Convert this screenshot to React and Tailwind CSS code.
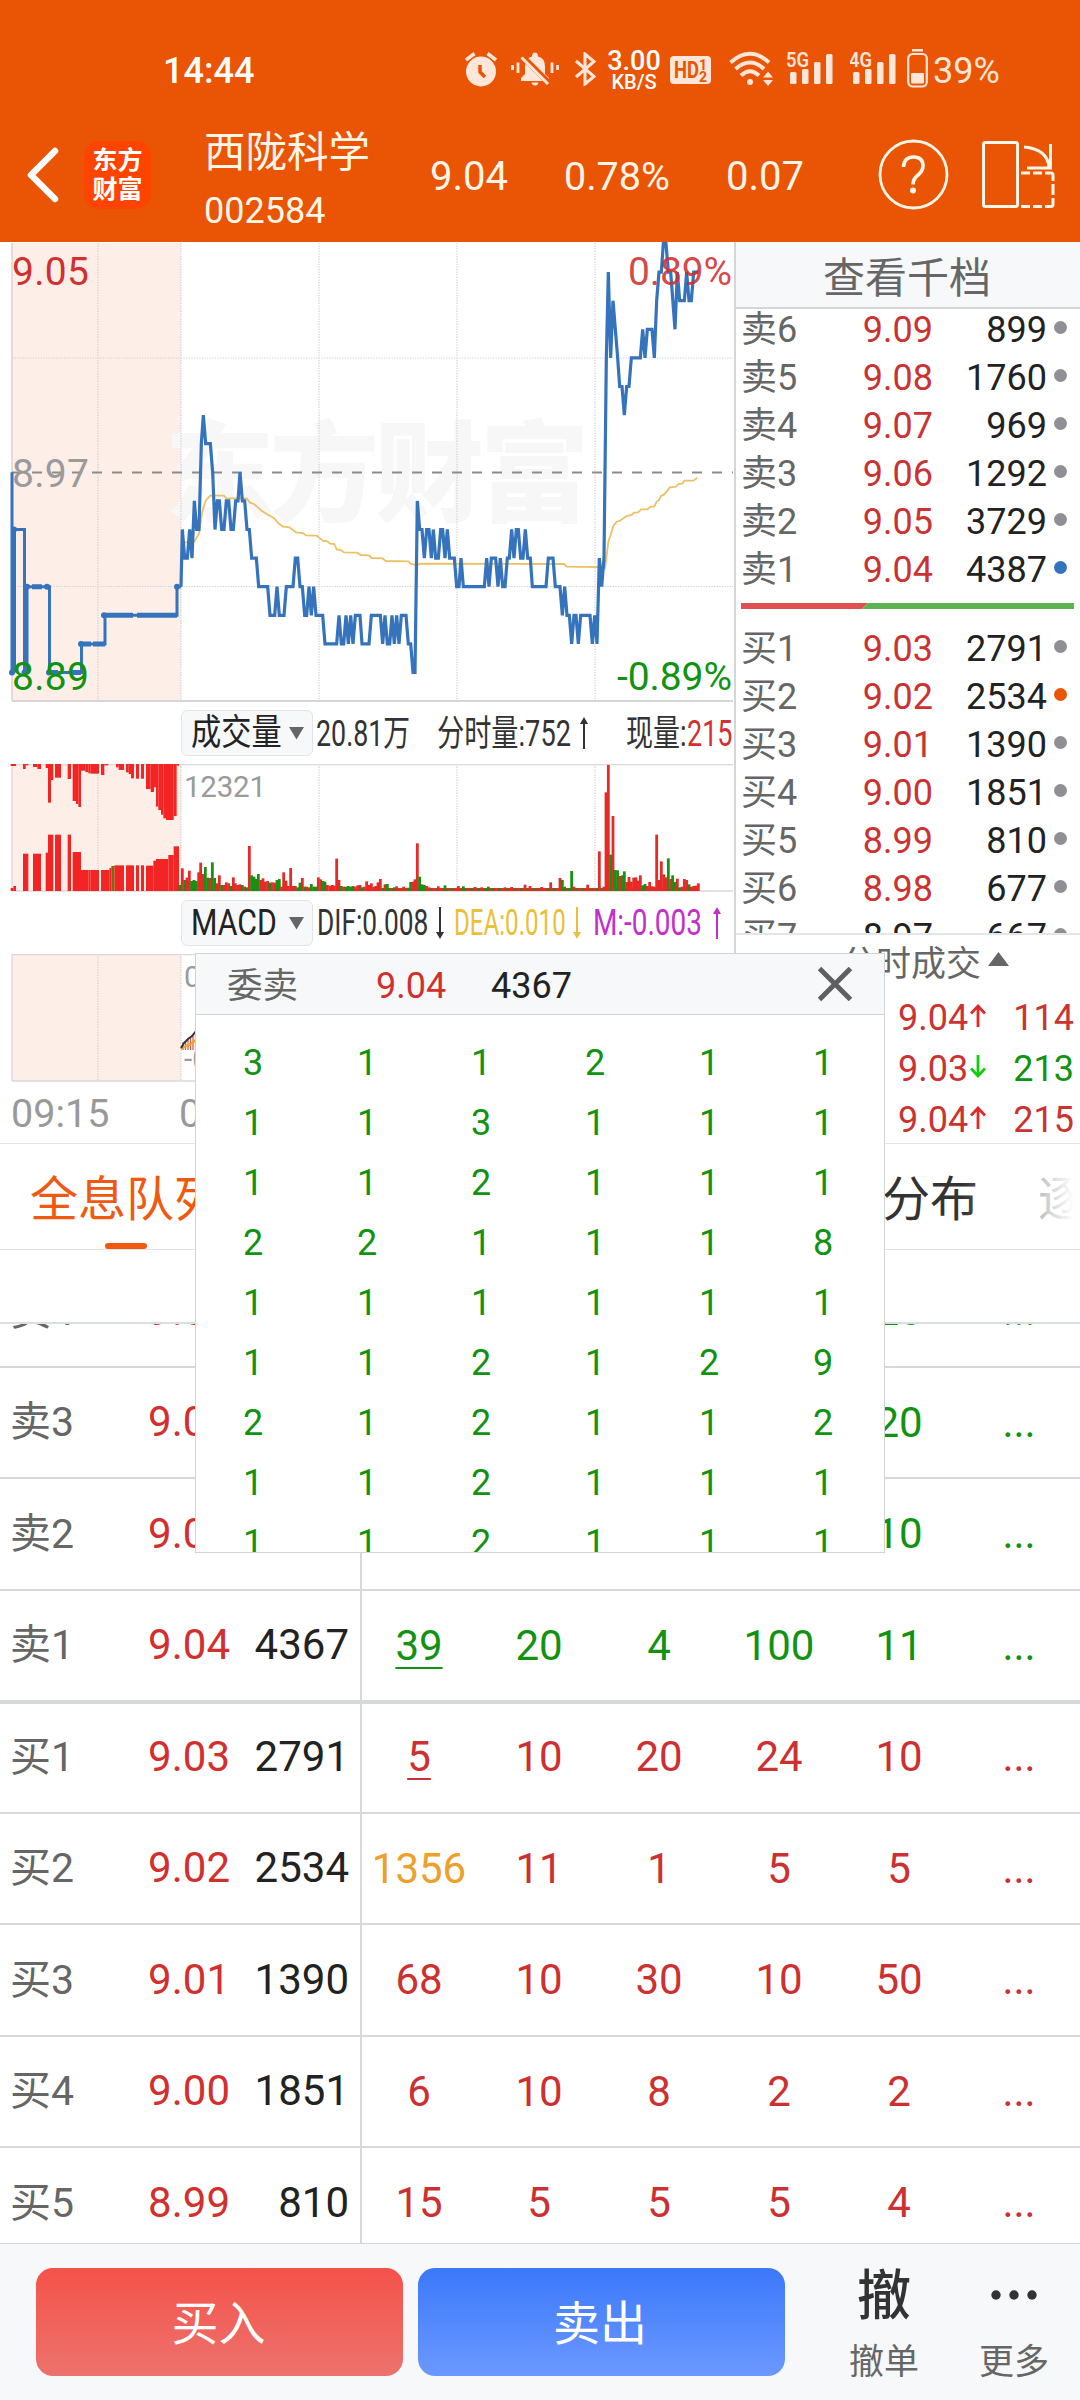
import React from 'react';

// Each price level is one cent away from the previous close
const PREV_CLOSE_Y = 472.3;
const LEVEL_STEP = 28.6;
const levelY = (level) => PREV_CLOSE_Y + level * LEVEL_STEP;

// [x, level] pairs, x in thirds of a pixel
const PRICE_POINTS = [
  [543, 4], [547, 2], [554, 3], [562, 3], [569, 2], [576, 3], [583, 1], [590, 2], [597, 2], [604, -1], [610, -2], [617, -1],
  [631, -1], [638, 0], [645, 2], [652, 1], [658, 1], [665, 2], [672, 2], [679, 1], [686, 1], [693, 2], [700, 2], [707, 1],
  [714, 1], [720, 0], [727, 1], [734, 1], [741, 2], [748, 2], [755, 3], [769, 3], [776, 4], [803, 4], [810, 5], [824, 5],
  [831, 4], [838, 5], [852, 5], [859, 4], [879, 4], [886, 3], [893, 3], [900, 4], [907, 4], [914, 5], [920, 5], [927, 4],
  [934, 5], [941, 4], [948, 5], [968, 5], [975, 6], [1010, 6], [1017, 5], [1024, 6], [1031, 6], [1038, 5], [1045, 6],
  [1052, 5], [1059, 6], [1066, 5], [1080, 5], [1086, 6], [1107, 6], [1114, 5], [1141, 5], [1148, 6], [1155, 5], [1162, 6],
  [1169, 6], [1176, 5], [1183, 6], [1190, 5], [1197, 6], [1204, 5], [1218, 5], [1225, 6], [1232, 6], [1239, 7], [1245, 7],
  [1252, 1], [1259, 2], [1266, 2], [1273, 3], [1280, 2], [1287, 2], [1294, 3], [1300, 2], [1307, 3], [1315, 3], [1322, 2],
  [1328, 2], [1335, 3], [1342, 2], [1349, 3], [1363, 3], [1370, 4], [1377, 4], [1383, 3], [1390, 4], [1453, 4], [1460, 3],
  [1467, 4], [1474, 3], [1487, 3], [1494, 4], [1501, 3], [1508, 4], [1515, 4], [1522, 3], [1528, 3], [1535, 2], [1542, 3],
  [1549, 2], [1555, 2], [1562, 3], [1569, 3], [1576, 2], [1583, 3], [1591, 3], [1597, 4], [1638, 4], [1645, 3], [1659, 3],
  [1666, 4], [1680, 4], [1687, 5], [1694, 4], [1701, 5], [1708, 5], [1715, 6], [1722, 5], [1728, 5], [1735, 6], [1742, 5],
  [1770, 5], [1777, 6], [1784, 5], [1791, 6], [1798, 3], [1805, 4], [1812, 3], [1819, -4], [1825, -7], [1832, -4],
  [1839, -6], [1846, -5], [1853, -4], [1859, -3], [1866, -3], [1873, -2], [1880, -3], [1887, -3], [1894, -4], [1921, -4],
  [1928, -5], [1935, -4], [1942, -5], [1956, -5], [1963, -4], [1970, -6], [1977, -7], [1984, -7], [1990, -8], [1998, -8],
  [2005, -7], [2012, -7], [2025, -5], [2032, -7], [2039, -6], [2053, -6], [2060, -7], [2067, -6], [2074, -6], [2081, -7],
  [2095, -7],
];

// Average price, both axes in thirds of a pixel
const AVG_POINTS = [
  [550, 908], [583, 905], [597, 880], [607, 815], [617, 782], [631, 766], [672, 767], [680, 775], [740, 775], [750, 788],
  [762, 792], [785, 812], [800, 822], [822, 834], [835, 850], [848, 859], [868, 862], [888, 877], [908, 879], [918, 886],
  [950, 887], [968, 902], [982, 904], [990, 911], [1003, 912], [1010, 928], [1022, 930], [1032, 937], [1072, 938],
  [1082, 945], [1107, 946], [1115, 954], [1148, 955], [1157, 963], [1225, 964], [1232, 971], [1252, 976], [1260, 971],
  [1692, 972], [1700, 980], [1798, 981], [1815, 985], [1819, 955], [1825, 905], [1832, 885], [1840, 858], [1850, 845],
  [1860, 842], [1880, 828], [1895, 825], [1902, 818], [1914, 817], [1924, 808], [1942, 808], [1952, 800], [1963, 799],
  [1970, 785], [1976, 782], [1983, 768], [1992, 764], [2010, 742], [2028, 740], [2035, 732], [2047, 731], [2053, 722],
  [2080, 722], [2092, 713],
];

// Call auction: [from, to, bottom] hanging and [from, to, top] standing bars
const AUCTION_TOP = [
  [32, 48, 228], [69, 77, 237], [77, 85, 226], [99, 112, 231], [112, 123, 237], [137, 144, 234], [144, 153, 338],
  [153, 160, 270], [165, 183, 263], [203, 213, 267], [218, 228, 333], [228, 235, 342], [235, 243, 351], [243, 256, 242],
  [256, 265, 246], [265, 272, 250], [272, 297, 251], [303, 313, 255], [313, 325, 226], [348, 356, 232], [356, 372, 240],
  [378, 386, 247], [386, 393, 252], [393, 402, 265], [408, 417, 266], [423, 432, 266], [438, 452, 297], [452, 462, 306],
  [462, 468, 292], [468, 475, 350], [475, 483, 360], [483, 490, 374], [490, 498, 385], [498, 521, 390], [521, 530, 378],
  [530, 537, 227],
];
const AUCTION_BOTTOM = [
  [32, 40, 594], [40, 48, 588], [69, 85, 491], [99, 123, 491], [137, 144, 488], [144, 160, 434], [165, 183, 434],
  [203, 213, 434], [218, 243, 486], [243, 265, 540], [272, 297, 540], [303, 328, 540], [328, 334, 534], [343, 372, 526],
  [378, 402, 526], [408, 417, 526], [423, 432, 526], [438, 460, 527], [460, 468, 512], [468, 505, 507], [505, 521, 495],
  [521, 537, 469], [265, 272, 540],
];

// [x, top, 1 = up / 0 = down]
const VOLUME = [
  [540, 585, 0], [547, 535, 1], [554, 570, 0], [561, 563, 1], [568, 542, 1], [575, 573, 0], [582, 570, 0], [589, 573, 0],
  [596, 547, 1], [602, 518, 1], [609, 552, 1], [616, 531, 0], [623, 563, 0], [630, 564, 1], [637, 517, 0], [644, 564, 0],
  [651, 580, 1], [658, 556, 1], [665, 585, 0], [672, 585, 1], [679, 577, 1], [686, 580, 1], [693, 588, 0], [700, 562, 1],
  [706, 580, 1], [713, 585, 1], [720, 583, 1], [727, 585, 0], [734, 590, 1], [741, 592, 0], [748, 468, 1], [755, 556, 0],
  [762, 560, 0], [769, 567, 0], [775, 552, 0], [782, 570, 1], [789, 565, 1], [796, 575, 1], [803, 573, 1], [810, 578, 0],
  [817, 577, 1], [824, 578, 1], [831, 570, 0], [838, 567, 0], [845, 590, 1], [851, 547, 1], [858, 572, 1], [865, 588, 1],
  [872, 534, 1], [879, 588, 1], [886, 588, 1], [893, 592, 0], [900, 578, 0], [907, 564, 1], [914, 590, 0], [920, 590, 1],
  [927, 592, 1], [934, 582, 0], [941, 590, 0], [948, 590, 0], [955, 562, 1], [962, 568, 1], [969, 573, 0], [975, 575, 0],
  [982, 585, 1], [990, 587, 1], [997, 585, 1], [1003, 587, 1], [1010, 506, 1], [1017, 570, 1], [1024, 588, 0],
  [1031, 590, 1], [1038, 590, 0], [1045, 588, 0], [1052, 590, 0], [1059, 588, 0], [1066, 590, 1], [1073, 586, 1],
  [1080, 585, 1], [1086, 592, 0], [1093, 590, 1], [1100, 574, 1], [1107, 585, 1], [1114, 580, 1], [1121, 590, 1],
  [1128, 588, 1], [1134, 577, 1], [1141, 567, 1], [1155, 583, 1], [1162, 582, 0], [1183, 592, 0], [1190, 589, 1],
  [1211, 590, 1], [1225, 593, 0], [1232, 576, 0], [1239, 575, 1], [1245, 568, 1], [1252, 460, 1], [1259, 560, 0],
  [1266, 583, 0], [1273, 585, 0], [1280, 588, 1], [1287, 592, 1], [1315, 589, 1], [1335, 586, 0], [1375, 588, 1],
  [1390, 589, 0], [1425, 591, 1], [1445, 592, 1], [1465, 590, 0], [1515, 592, 1], [1535, 591, 1], [1575, 584, 1],
  [1590, 588, 1], [1625, 591, 1], [1652, 577, 1], [1680, 564, 1], [1687, 570, 0], [1694, 590, 0], [1715, 543, 0],
  [1722, 590, 1], [1763, 584, 1], [1798, 484, 1], [1812, 590, 1], [1818, 307, 1], [1825, 225, 1], [1832, 494, 0],
  [1839, 378, 1], [1846, 540, 0], [1853, 541, 0], [1860, 558, 1], [1867, 556, 0], [1873, 544, 0], [1880, 576, 1],
  [1887, 561, 1], [1894, 575, 1], [1901, 563, 1], [1908, 562, 1], [1915, 572, 1], [1921, 556, 1], [1928, 586, 0],
  [1935, 582, 0], [1942, 588, 1], [1949, 576, 1], [1956, 589, 1], [1963, 590, 1], [1970, 434, 1], [1977, 570, 1],
  [1984, 514, 1], [1991, 553, 1], [1998, 562, 1], [2005, 505, 0], [2012, 567, 1], [2018, 556, 0], [2025, 576, 0],
  [2032, 566, 1], [2039, 592, 0], [2046, 590, 1], [2053, 567, 1], [2060, 570, 1], [2067, 583, 0], [2074, 590, 1],
  [2081, 588, 1], [2088, 587, 1], [2095, 580, 1],
];

const ASKS = [
  ['卖6', '9.09', '899'],
  ['卖5', '9.08', '1760'],
  ['卖4', '9.07', '969'],
  ['卖3', '9.06', '1292'],
  ['卖2', '9.05', '3729'],
  ['卖1', '9.04', '4387', 'bg-[#3573bd]'],
];

const BIDS = [
  ['买1', '9.03', '2791'],
  ['买2', '9.02', '2534', 'bg-[#e95504]'],
  ['买3', '9.01', '1390'],
  ['买4', '9.00', '1851'],
  ['买5', '8.99', '810'],
  ['买6', '8.98', '677'],
  ['买7', '8.97', '667'],
];

const TRADES = [
  { price: '9.04', up: true, volume: '114' },
  { price: '9.03', up: false, volume: '213' },
  { price: '9.04', up: true, volume: '215' },
];

const QUEUE = [
  { label: '卖4', price: '9.07', total: '969', side: 'sell', orders: ['10', '5', '2', '10', '20'] },
  { label: '卖3', price: '9.06', total: '1292', side: 'sell', orders: ['10', '5', '2', '10', '20'] },
  { label: '卖2', price: '9.05', total: '3729', side: 'sell', orders: ['10', '5', '2', '10', '10'] },
  { label: '卖1', price: '9.04', total: '4367', side: 'sell', orders: ['39', '20', '4', '100', '11'], first: true },
  { label: '买1', price: '9.03', total: '2791', side: 'buy', orders: ['5', '10', '20', '24', '10'], first: true },
  { label: '买2', price: '9.02', total: '2534', side: 'buy', orders: ['1356', '11', '1', '5', '5'] },
  { label: '买3', price: '9.01', total: '1390', side: 'buy', orders: ['68', '10', '30', '10', '50'] },
  { label: '买4', price: '9.00', total: '1851', side: 'buy', orders: ['6', '10', '8', '2', '2'] },
  { label: '买5', price: '8.99', total: '810', side: 'buy', orders: ['15', '5', '5', '5', '4'] },
];

const POPUP_ROWS = [
  ['1', '1', '31', '13', '1', '1'],
  ['3', '1', '1', '2', '1', '1'],
  ['1', '1', '3', '1', '1', '1'],
  ['1', '1', '2', '1', '1', '1'],
  ['2', '2', '1', '1', '1', '8'],
  ['1', '1', '1', '1', '1', '1'],
  ['1', '1', '2', '1', '2', '9'],
  ['2', '1', '2', '1', '1', '2'],
  ['1', '1', '2', '1', '1', '1'],
  ['1', '1', '2', '1', '1', '1'],
];

const SignalBars = ({ label }) => (
  <svg width="46" height="34" viewBox="0 0 46 34" fill="#ffe6d8">
    <text x="-1" y="16" fontSize="21" fontWeight="600" textLength="23" lengthAdjust="spacingAndGlyphs" fontFamily="Roboto">{label}</text>
    <rect x="3" y="21" width="6.5" height="12" rx="1.5" />
    <rect x="15" y="18" width="6.5" height="15" rx="1.5" />
    <rect x="27" y="11" width="6.5" height="22" rx="1.5" />
    <rect x="39" y="3" width="6.5" height="30" rx="1.5" />
  </svg>
);

const StatusBar = () => (
  <div className="flex h-[112px] items-start pt-[49px] text-[#ffe6d8]">
    <span className="ml-[163px] mt-[4px] w-[300px] text-[36px] leading-[36px] font-medium text-white">14:44</span>

    {/* alarm */}
    <svg className="ml-[2px] mt-[3px]" width="32" height="35" viewBox="0 0 32 35" fill="none">
      <circle cx="16" cy="19.5" r="15" fill="#ffe6d8" />
      <path d="M1 8 L9.500 1.500 M31 8 L22.500 1.500" stroke="#ffe6d8" strokeWidth="3.500" />
      <path d="M15 13 V20 L20 25" stroke="#e95504" strokeWidth="3.500" />
    </svg>

    {/* muted bell */}
    <svg className="ml-[14px] mt-[3px]" width="48" height="34" viewBox="0 0 48 34" fill="#ffe6d8">
      <path d="M10 29 V26 L14 22 V14 Q14 6 21 4.500 Q21 0.500 24 0.500 Q27 0.500 27 4.500 Q34 6 34 14 V22 L38 26 V29 Z M20.500 30.500 H27.500 Q27 33.500 24 33.500 Q21 33.500 20.500 30.500 Z" />
      <path d="M11 4 L38 31" stroke="#e95504" strokeWidth="6" />
      <path d="M10.500 5.500 L37 32" stroke="#ffe6d8" strokeWidth="3" />
      <path d="M1.500 13 V18 M7 10.500 V21 M41 10.500 V21 M46.500 13 V18" stroke="#ffe6d8" strokeWidth="2.800" />
    </svg>

    {/* bluetooth */}
    <svg className="ml-[16px] mt-[3px]" width="22" height="34" viewBox="0 0 22 34" fill="none" stroke="#ffe6d8" strokeWidth="3">
      <path d="M1 9 L19 24.500 L10 32 V2 L19 9.500 L1 25" />
    </svg>

    <div className="ml-[9px] flex w-[56px] flex-col items-center pt-[1px] text-white">
      <span className="text-[27px] leading-[23px] font-medium">3.00</span>
      <span className="text-[20px] leading-[19px] font-medium">KB/S</span>
    </div>

    {/* HD badge */}
    <svg className="ml-[8px] mt-[7px]" width="41" height="28" viewBox="0 0 41 28">
      <rect width="41" height="28" rx="4" fill="#ffe6d8" />
      <text x="4" y="22" fontSize="23" fontWeight="700" fill="#e95504" textLength="25" lengthAdjust="spacingAndGlyphs" fontFamily="Roboto">HD</text>
      <text x="29" y="14" fontSize="14" fontWeight="700" fill="#e95504" fontFamily="Roboto">1</text>
      <text x="29" y="25.500" fontSize="14" fontWeight="700" fill="#e95504" fontFamily="Roboto">2</text>
    </svg>

    {/* wifi */}
    <svg className="ml-[18px] mt-[2px]" width="45" height="35" viewBox="0 0 45 35" fill="none" stroke="#ffe6d8" strokeWidth="4">
      <path d="M1.500 11.500 Q21 -6 40 11.500" />
      <path d="M6.500 18 Q21 5 35 18" />
      <path d="M12 24.500 Q21 16 30 24.500" />
      <circle cx="21" cy="31" r="3" fill="#ffe6d8" stroke="none" />
      <path d="M34 26.500 L39 20.500 L44 26.500 Z M34 29 H44 L39 35 Z" fill="#ffe6d8" stroke="none" />
    </svg>

    <div className="ml-[13px] mt-[2px]"><SignalBars label="5G" /></div>
    <div className="ml-[17px] mt-[2px]"><SignalBars label="4G" /></div>

    {/* battery */}
    <svg className="ml-[11px]" width="21" height="39" viewBox="0 0 21 39" fill="none">
      <rect x="5" y="0" width="11" height="2.500" fill="#ffe6d8" />
      <rect x="1.200" y="5" width="18.600" height="32.500" rx="4.500" stroke="#ffe6d8" strokeWidth="2.200" />
      <rect x="4" y="24" width="13" height="10.500" rx="1" fill="#ffe6d8" />
    </svg>
    <span className="ml-[5px] mt-[4px] text-[36px] leading-[36px]">39%</span>
  </div>
);

const Header = () => (
  <header className="h-[242px] w-full shrink-0 bg-[#e95504] text-white">
    <StatusBar />
    <div className="flex h-[125px] items-center text-[#fff6e8]">
      <svg className="ml-[26px]" width="34" height="58" viewBox="0 0 34 58" fill="none" stroke="#fff" strokeWidth="6.500" strokeLinecap="round" strokeLinejoin="round">
        <path d="M29 5 L5 29 L29 53" />
      </svg>
      <div className="ml-[24px] flex h-[68px] w-[67px] flex-col items-center justify-center rounded-[15px] bg-[#ff4400] text-[25px] leading-[29px] font-bold text-white">
        <span>东方</span>
        <span>财富</span>
      </div>
      <div className="ml-[53px] flex w-[226px] flex-col pt-[17px]">
        <span className="text-[41.500px] leading-[56px]">西陇科学</span>
        <span className="text-[36px] leading-[60px]">002584</span>
      </div>
      <span className="w-[134px] pt-[5px] text-[40px]">9.04</span>
      <span className="w-[162px] pt-[5px] text-[39.500px]">0.78%</span>
      <span className="w-[152px] pt-[5px] text-[40px]">0.07</span>
      <svg width="71" height="71" viewBox="0 0 71 71" fill="none" stroke="#fff6e8" strokeWidth="2.800">
        <circle cx="35.500" cy="35.500" r="33.500" />
        <path d="M25.500 28 Q26 18 35.500 18 Q45 18 45 27 Q45 32 39.500 36.500 Q35 40 35 45.500" strokeWidth="3.600" />
        <circle cx="35" cy="51.500" r="3" fill="#fff6e8" stroke="none" />
      </svg>
      {/* switch to landscape */}
      <svg className="ml-[32px]" width="74" height="68" viewBox="0 0 74 68" fill="none" stroke="#fff6e8" strokeWidth="3">
        <rect x="2.500" y="1.500" width="34" height="64" rx="2" />
        <path d="M43 6 Q67 8 68 27 M69.500 3 V27 H46" />
        <path d="M40 32 H49 M52 32 H61 M64 32 H70 Q72 32 72 34 V40 M72 43 V54 M72 57 V63 Q72 65.500 70 65.500 H64 M61 65.500 H52 M49 65.500 H40" />
      </svg>
    </div>
  </header>
);

const GridLines = ({ top, bottom }) => (
  <g stroke="#d2d0d0" strokeWidth="1.200" strokeDasharray="1.300 1.300">
    {[98, 181, 319, 457, 595].map((x) => (
      <line key={x} x1={x} y1={top} x2={x} y2={bottom} />
    ))}
  </g>
);

const PriceChart = () => (
  <svg className="block" width="734" height="460" viewBox="0 242 734 460" fill="none" fontFamily="Roboto, 'Noto Sans CJK SC', sans-serif">
    <rect x="12" y="243" width="169" height="458" fill="#fdeee7" />
    <text x="165" y="513" fontSize="109" fontWeight="900" fill="#f7f7f7" textLength="424">东方财富</text>
    <GridLines top={243} bottom={701} />
    <path d="M12 358 H733 M12 586.500 H733" stroke="#d2d0d0" strokeWidth="1.200" strokeDasharray="1.300 1.300" />
    <path d="M12 243 V701" stroke="#d8d4d3" strokeWidth="1.500" />
    <path d="M12 701 H733" stroke="#d5d5d5" strokeWidth="2" />
    <path d="M12 472.500 H733" stroke="#8b8b8b" strokeWidth="2" strokeDasharray="10 10" />
    <polyline points={AVG_POINTS.map(([x, y]) => `${x / 3},${240 + y / 3}`).join(' ')} stroke="#ecc063" strokeWidth="1.800" />
    {/* call auction */}
    <g stroke="#3573bd" strokeWidth="3">
      <path d={`M12 ${levelY(0)} V${levelY(7)} M14.500 ${levelY(2)} V${levelY(7)} M12 ${levelY(2)} H24.500 V${levelY(7)} M27 ${levelY(7)} V${levelY(4)} H49.500 V${levelY(7)} H81.500 V${levelY(6)} H105 V${levelY(5)} H177 V${levelY(4)} H181`} />
      <path d={`M32 ${levelY(4)} H42 M50 ${levelY(7)} H58 M71 ${levelY(7)} H81 M82 ${levelY(6)} H91 M93 ${levelY(6)} H105 M105 ${levelY(5)} H133 M137 ${levelY(5)} H177`} strokeWidth="5" />
    </g>
    <g fill="#3573bd">
      {[[12, 7], [14, 2], [24.5, 7], [27, 4], [47, 4], [49, 7], [81, 6], [104, 5], [177, 4]].map(([x, level]) => (
        <circle key={`${x}-${level}`} cx={x} cy={levelY(level)} r="3" />
      ))}
    </g>
    <polyline points={PRICE_POINTS.map(([x, level]) => `${x / 3},${levelY(level)}`).join(' ')} stroke="#3573bd" strokeWidth="3.200" />
    <g fontSize="39">
      <text x="12" y="285" fill="#d22f2f" textLength="77">9.05</text>
      <text x="12" y="486.500" fill="#9a9a9a" textLength="77">8.97</text>
      <text x="12" y="689.500" fill="#119311" textLength="77">8.89</text>
      <text x="628" y="285" fill="#d22f2f" fillOpacity="0.9" textLength="104">0.89%</text>
      <text x="617" y="689.500" fill="#119311" textLength="115">-0.89%</text>
    </g>
  </svg>
);

const VolumeChart = () => {
  const bars = [];
  // thin baseline activity under the real bars
  for (let x = 1148, i = 0; x < 2090; x += 6.9, i += 1) {
    bars.push([x, 594, i % 3 === 0 ? 0 : 1]);
  }

  return (
    <svg className="block" width="734" height="128" viewBox="0 764 734 128" fontFamily="Roboto, sans-serif">
      <rect x="12" y="764" width="169" height="127" fill="#fdeee7" />
      <GridLines top={764} bottom={891} />
      <path d="M12 764.500 H733 M12 891 H733 M12 764 V891" stroke="#dad8d8" strokeWidth="1.300" />
      <g fill="#f22424">
        {AUCTION_TOP.map(([from, to, y]) => (
          <rect key={from} x={from / 3} y="764" width={(to - from) / 3} height={y / 3 + 690 - 764} />
        ))}
        {AUCTION_BOTTOM.map(([from, to, y]) => (
          <rect key={from} x={from / 3} y={y / 3 + 690} width={(to - from) / 3} height={201 - y / 3} />
        ))}
      </g>
      <rect x="111.300" y="866" width="3" height="25" fill="#7b6a14" />
      {[...bars, ...VOLUME].map(([x, y, up], i) => (
        <rect key={i} x={x / 3 - 1.4} y={y / 3 + 690} width="2.800" height={201 - y / 3} fill={up ? '#e62a27' : '#1b8f12'} />
      ))}
      <text x="184" y="797" fontSize="29.500" fill="#9a9a9a" textLength="82">12321</text>
    </svg>
  );
};

const MacdChart = () => (
  <svg className="block" width="734" height="128" viewBox="0 954 734 128" fill="none" fontFamily="Roboto, sans-serif">
    <rect x="12" y="954" width="169" height="127" fill="#fdeee7" />
    <GridLines top={954} bottom={1081} />
    <path d="M12 954.500 H733 M12 1081 H733 M12 954 V1081" stroke="#dad8d8" strokeWidth="1.300" />
    <path d="M183 1050 V1042 M185.500 1050 V1041 M188 1050 V1038 M190.500 1050 V1037 M193 1050 V1035 M195.500 1050 V1033" stroke="#d8544c" strokeWidth="1.200" />
    <path d="M181 1049 L186 1046 L191 1044 L196 1040" stroke="#eda52c" strokeWidth="2.500" />
    <path d="M181 1048 L184 1043 L188 1039 L192 1036 L196 1031" stroke="#333" strokeWidth="2" />
    <g fontSize="29.500" fill="#9a9a9a">
      <text x="184" y="987">0.023</text>
      <text x="184" y="1069">-0.023</text>
    </g>
  </svg>
);

const Pill = ({ children }) => (
  <div className="ml-[181px] flex h-[46px] w-[132px] shrink-0 items-center rounded-[6px] border border-[#e2e5e8] bg-[#f6f8fa] pl-[9px] text-[#222]">
    <div className="w-[98px]">
      <span className="inline-block origin-left scale-x-[0.840] whitespace-nowrap">{children}</span>
    </div>
    <svg width="15" height="13" viewBox="0 0 15 13"><path d="M0 0 H15 L7.500 12.500 Z" fill="#666" /></svg>
  </div>
);

const Arrow = ({ up, color }) => (
  <svg className="shrink-0" width="8" height="32" viewBox="0 0 8 32">
    <g transform={up ? undefined : 'rotate(180 4 16)'} fill={color}>
      <path d="M0 7 L4 0 L8 7 Z" />
      <rect x="3" y="6" width="2" height="26" />
    </g>
  </svg>
);

const ChartPanel = () => (
  <section className="w-[734px] shrink-0">
    <PriceChart />
    <div className="flex h-[62px] items-center text-[36px] leading-[46px] whitespace-nowrap text-[#333]">
      <Pill>成交量</Pill>
      <div className="w-[122px] shrink-0 pt-[1px] pl-[3px]"><span className="inline-block origin-left scale-x-[0.745]">20.81万</span></div>
      <div className="w-[145px] shrink-0 pt-[1px] pl-[2px]"><span className="inline-block origin-left scale-x-[0.755]">分时量:752</span></div>
      <Arrow up color="#333" />
      <div className="w-[98px] shrink-0 pt-[1px] pl-[38px]"><span className="inline-block origin-left scale-x-[0.750]">现量:</span></div>
      <div className="w-[44px] shrink-0 pt-[1px] pl-[1px] text-[#d22f2f]"><span className="inline-block origin-left scale-x-[0.750]">215</span></div>
    </div>
    <VolumeChart />
    <div className="flex h-[62px] items-center text-[36px] leading-[46px] whitespace-nowrap text-[#333]">
      <Pill>MACD</Pill>
      <div className="w-[123px] shrink-0 pl-[4px]"><span className="inline-block origin-left scale-x-[0.730]">DIF:0.008</span></div>
      <Arrow color="#333" />
      <div className="w-[129px] shrink-0 pl-[10px] text-[#e9c037]"><span className="inline-block origin-left scale-x-[0.670]">DEA:0.010</span></div>
      <Arrow color="#e9c037" />
      <div className="w-[132px] shrink-0 pl-[12px] text-[#c22fca]"><span className="inline-block origin-left scale-x-[0.775]">M:-0.003</span></div>
      <Arrow up color="#c22fca" />
    </div>
    <MacdChart />
    <div className="flex h-[61px] items-center text-[39.500px] text-[#999]">
      <span className="ml-[11px] w-[168px] pt-[3px]">09:15</span>
      <span className="pt-[3px]">09:30</span>
    </div>
  </section>
);

const BookRow = ({ row: [label, price, volume, dot = 'bg-[#918f96]'] }) => (
  <div className="flex h-[48px] shrink-0 items-center text-[36px] leading-[48px]">
    <span className="w-[98px] pl-[5px] text-[#666]">{label}</span>
    <span className={`w-[99px] text-right ${price === '8.97' ? 'text-[#222]' : 'text-[#cb3232]'}`}>{price}</span>
    <span className="w-[114px] text-right text-[#222]">{volume}</span>
    <span className={`mb-[5px] ml-[7px] h-[13px] w-[13px] rounded-full ${dot}`} />
  </div>
);

const OrderBook = () => (
  <section className="flex h-[901px] w-[346px] flex-col border-l-2 border-[#d3d6d9]">
    <div className="flex h-[67px] shrink-0 items-center justify-center border-b-2 border-[#d3d6d9] bg-[#f6f8fa] pt-[7px] pr-[2px] text-[42px] text-[#666]">
      查看千档
    </div>
    <div className="h-[624px] shrink-0 overflow-hidden">
      <div className="-mt-[3px] flex flex-col">
        {ASKS.map((row) => <BookRow key={row[0]} row={row} />)}
        <svg className="ml-[5px] mt-[9px] mb-[16px] block" width="333" height="6" viewBox="0 0 333 6">
          <path d="M0 0 H127 L121 6 H0 Z" fill="#df5150" />
          <path d="M127 0 H333 V6 H121 Z" fill="#5cb450" />
        </svg>
        {BIDS.map((row) => <BookRow key={row[0]} row={row} />)}
      </div>
    </div>
    <div className="flex h-[60px] shrink-0 items-center border-t-2 border-[#e3e5e7] pl-[105px] text-[35px] text-[#666]">
      <span className="pt-[2px] pr-[7px] leading-[48px]">分时成交</span>
      <svg className="mb-[10px]" width="21" height="14" viewBox="0 0 21 14"><path d="M0 14 L10.500 0 L21 14 Z" fill="#666" /></svg>
    </div>
    {TRADES.map((trade, i) => (
      <div key={i} className="flex h-[51px] shrink-0 items-center pl-[162px] text-[36px] leading-[51px] text-[#cb3232]">
        <span className="w-[72px]">{trade.price}</span>
        <svg className="mb-[6px]" width="16" height="23" viewBox="0 0 16 23" fill="none" strokeWidth="2.800">
          {trade.up
            ? <path d="M8 23 V2 M1 9.500 L8 2 L15 9.500" stroke="#dd2a2a" />
            : <path d="M8 0 V21 M1 13.500 L8 21 L15 13.500" stroke="#12cc12" />}
        </svg>
        <span className={`w-[88px] text-right ${trade.up ? '' : 'text-[#119311]'}`}>{trade.volume}</span>
      </div>
    ))}
  </section>
);

const Tabs = () => (
  <nav className="relative flex h-[107px] shrink-0 gap-[60px] overflow-hidden border-y border-[#e1e3e5] pl-[30px] text-[48px] leading-[112px] whitespace-nowrap text-[#333]">
    <div className="flex flex-col items-center text-[#ef5a10]">
      <span className="h-[99px]">全息队列</span>
      <span className="h-[6px] w-[42px] rounded-full bg-[#ef5a10]" />
    </div>
    <span>千档盘口</span>
    <span>分价统计</span>
    <span>成交分布</span>
    <span>逐笔成交</span>
    <div className="absolute top-0 right-0 h-full w-[130px] bg-linear-to-r from-white/0 from-10% to-white to-95%" />
  </nav>
);

const QueueRow = ({ row }) => {
  const tone = row.side === 'sell' ? 'text-[#119311]' : 'text-[#cd3030]';

  return (
    <div className={`box-content flex h-[109.500px] shrink-0 items-center border-b-2 border-[#d6d8dc] text-[42px] leading-[110px] ${row.label === '卖1' ? 'shadow-[0_1px_0_1px_#d6d8dc]' : ''}`}>
      <span className="w-[129px] pl-[10px] text-[41px] text-[#666]">{row.label}</span>
      <span className="w-[101px] text-right text-[#d22f2f]">{row.price}</span>
      <span className="w-[119px] text-right text-[#222]">{row.total}</span>
      <div className="ml-[11px] h-full border-l-2 border-[#d6d8dc]" />
      <div className="-ml-[3px] grid h-full w-[720px] shrink-0 grid-cols-6 text-center">
        {row.orders.map((order, i) => (
          <span
            key={i}
            className={`${order === '1356' ? 'text-[#eda02c]' : tone} ${row.first && i === 0 ? 'underline decoration-2 underline-offset-[7px]' : ''}`}
          >
            {order}
          </span>
        ))}
        <span className={tone}>...</span>
      </div>
    </div>
  );
};

const BottomBar = () => (
  <footer className="flex h-[157px] shrink-0 border-t border-[#d2d5d9] bg-[#f6f8fa] pt-[24px] pl-[36px]">
    <button className="h-[108px] w-[367px] rounded-[17px] bg-linear-to-b from-[#f4514a] to-[#ec726c] pt-[5px] pr-[2px] text-[47px] text-white">买入</button>
    <button className="ml-[15px] h-[108px] w-[367px] rounded-[17px] bg-linear-to-b from-[#3b78fa] to-[#6b98ff] pt-[5px] pr-[3px] text-[47px] text-white">卖出</button>
    <div className="ml-[49px] flex w-[100px] flex-col items-center">
      <span className="mt-[2px] text-[54px] leading-[54px] font-medium text-[#333]">撤</span>
      <span className="mt-[15px] text-[35px] leading-[48px] text-[#666]">撤单</span>
    </div>
    <div className="ml-[30px] flex w-[100px] flex-col items-center">
      <svg className="mt-[22px] mb-[24px]" width="46" height="10" viewBox="0 0 46 10" fill="#333">
        <circle cx="5" cy="5" r="4.700" />
        <circle cx="23" cy="5" r="4.700" />
        <circle cx="41" cy="5" r="4.700" />
      </svg>
      <span className="mt-[15px] text-[35px] leading-[48px] text-[#666]">更多</span>
    </div>
  </footer>
);

const OrderPopup = () => (
  <div className="absolute top-[953px] left-[195px] h-[600px] w-[690px] overflow-hidden border border-[#d0d4d7] bg-white text-[36px]">
    <div className="flex h-[61px] items-center border-b border-[#d0d4d7] bg-[#f6f8fa] pt-[4px]">
      <span className="w-[149px] pt-[1px] pl-[31px] text-[35.500px] text-[#666]">委卖</span>
      <span className="ml-[31px] w-[115px] text-[#d22f2f]">9.04</span>
      <span className="w-[327px] text-[#222]">4367</span>
      <svg className="mb-[4px]" width="34" height="34" viewBox="0 0 34 34" stroke="#5f5f5f" strokeWidth="5">
        <path d="M1.500 1.500 L32.500 32.500 M32.500 1.500 L1.500 32.500" />
      </svg>
    </div>
    <div className="h-[538px] overflow-hidden">
      <div className="-mt-[42px] grid w-[684px] grid-cols-6 text-center leading-[60px] text-[#119311]">
        {POPUP_ROWS.flat().map((value, i) => <span key={i}>{value}</span>)}
      </div>
    </div>
  </div>
);

export default function App() {
  return (
    <div className="relative flex h-[2400px] w-[1080px] flex-col overflow-hidden bg-white font-['Roboto','Noto_Sans_CJK_SC',sans-serif]">
      <Header />
      <main className="flex h-[901px] shrink-0">
        <ChartPanel />
        <OrderBook />
      </main>
      <Tabs />
      <div className="h-[74px] shrink-0 border-b-2 border-[#dcdfe1]" />
      <div className="h-[919px] shrink-0 overflow-hidden">
        <div className="-mt-[68px] flex flex-col">
          {QUEUE.map((row) => <QueueRow key={row.label} row={row} />)}
        </div>
      </div>
      <BottomBar />
      <OrderPopup />
    </div>
  );
}
